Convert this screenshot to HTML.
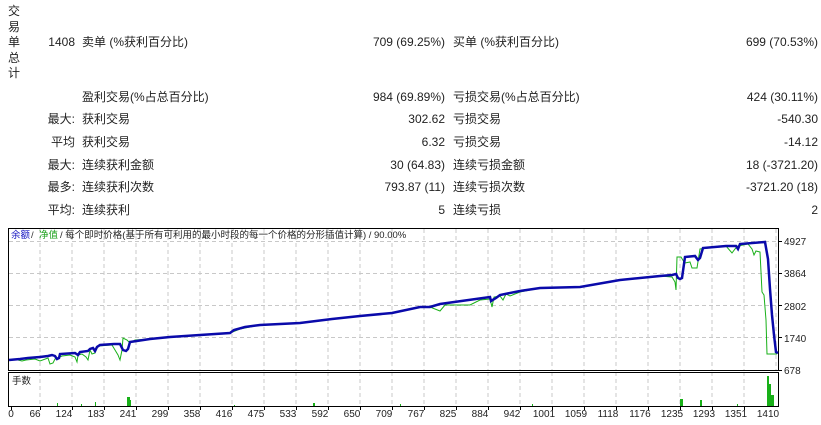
<!DOCTYPE html>
<html><head><meta charset="utf-8"><style>
body{margin:0;width:821px;height:425px;background:#fff;overflow:hidden;font-family:"Liberation Sans","Noto Sans CJK SC",sans-serif;font-size:12px;color:#222;position:relative}
.t{position:absolute;white-space:nowrap;line-height:14px}
.r{text-align:right}
.v{position:absolute;left:8px;top:4px;width:14px;line-height:15.5px;font-size:12px}
</style></head><body>
<div class="v">交<br>易<br>单<br>总<br>计</div>
<div class="t r" style="right:746px;top:35px">1408</div>
<div class="t" style="left:82px;top:35px">卖单 (%获利百分比)</div>
<div class="t r" style="right:376px;top:35px">709 (69.25%)</div>
<div class="t" style="left:453px;top:35px">买单 (%获利百分比)</div>
<div class="t r" style="right:3px;top:35px">699 (70.53%)</div>

<div class="t" style="left:82px;top:90px">盈利交易(%占总百分比)</div>
<div class="t r" style="right:376px;top:90px">984 (69.89%)</div>
<div class="t" style="left:453px;top:90px">亏损交易(%占总百分比)</div>
<div class="t r" style="right:3px;top:90px">424 (30.11%)</div>

<div class="t r" style="right:746px;top:112px">最大:</div>
<div class="t" style="left:82px;top:112px">获利交易</div>
<div class="t r" style="right:376px;top:112px">302.62</div>
<div class="t" style="left:453px;top:112px">亏损交易</div>
<div class="t r" style="right:3px;top:112px">-540.30</div>

<div class="t r" style="right:746px;top:135px">平均</div>
<div class="t" style="left:82px;top:135px">获利交易</div>
<div class="t r" style="right:376px;top:135px">6.32</div>
<div class="t" style="left:453px;top:135px">亏损交易</div>
<div class="t r" style="right:3px;top:135px">-14.12</div>

<div class="t r" style="right:746px;top:158px">最大:</div>
<div class="t" style="left:82px;top:158px">连续获利金额</div>
<div class="t r" style="right:376px;top:158px">30 (64.83)</div>
<div class="t" style="left:453px;top:158px">连续亏损金额</div>
<div class="t r" style="right:3px;top:158px">18 (-3721.20)</div>

<div class="t r" style="right:746px;top:180px">最多:</div>
<div class="t" style="left:82px;top:180px">连续获利次数</div>
<div class="t r" style="right:376px;top:180px">793.87 (11)</div>
<div class="t" style="left:453px;top:180px">连续亏损次数</div>
<div class="t r" style="right:3px;top:180px">-3721.20 (18)</div>

<div class="t r" style="right:746px;top:203px">平均:</div>
<div class="t" style="left:82px;top:203px">连续获利</div>
<div class="t r" style="right:376px;top:203px">5</div>
<div class="t" style="left:453px;top:203px">连续亏损</div>
<div class="t r" style="right:3px;top:203px">2</div>

<svg style="position:absolute;left:0;top:0" width="821" height="425" font-family="Liberation Sans, Noto Sans CJK SC, sans-serif">
<g stroke="#c8c8c8" stroke-dasharray="4,3" stroke-width="1">
<path d="M40 229V370M72 229V370M104 229V370M136 229V370M168 229V370M200 229V370M232 229V370M264 229V370M296 229V370M328 229V370M360 229V370M392 229V370M424 229V370M456 229V370M488 229V370M520 229V370M552 229V370M584 229V370M616 229V370M648 229V370M680 229V370M712 229V370M744 229V370M776 229V370"/>
<path d="M40 372V406M72 372V406M104 372V406M136 372V406M168 372V406M200 372V406M232 372V406M264 372V406M296 372V406M328 372V406M360 372V406M392 372V406M424 372V406M456 372V406M488 372V406M520 372V406M552 372V406M584 372V406M616 372V406M648 372V406M680 372V406M712 372V406M744 372V406"/>
<path d="M9 241.5H778M9 273.5H778M9 305.5H778M9 337.5H778"/>
</g>
<rect x="8.5" y="228.5" width="770" height="142" fill="none" stroke="#000"/>
<rect x="8.5" y="372.5" width="770" height="34" fill="none" stroke="#000"/>
<g stroke="#000"><path d="M778 241.5h4M778 273.5h4M778 305.5h4M778 337.5h4M778 370.5h4"/>
<path d="M11.5 407v3M40.5 407v3M72.5 407v3M104.5 407v3M136.5 407v3M168.5 407v3M200.5 407v3M232.5 407v3M264.5 407v3M296.5 407v3M328.5 407v3M360.5 407v3M392.5 407v3M424.5 407v3M456.5 407v3M488.5 407v3M520.5 407v3M552.5 407v3M584.5 407v3M616.5 407v3M648.5 407v3M680.5 407v3M712.5 407v3M744.5 407v3"/></g>
<path fill="none" stroke="#18b018" stroke-width="1" d="M9 360L18 360L22 361L26 360L35 359L40 361L48 358L50 364L53 363L55 359L62 356L70 355L75 357L77 362L78 355L82 354L86 357L88 360L90 350L92 354L95 353L98 346L112 345L115 350L118 355L120 360L122 350L123 338L127 340L130 343L135 340L150 339L200 335L230 333L240 329L260 325L300 323L330 319L360 316L392 313L420 307L430 307L440 311L445 305L470 305L480 300L490 299L492 307L494 297L500 296L503 300L506 294L510 296L520 292L540 288L580 287L620 280L660 276L672 277L675 282L676 290L677 257L681 257L684 262L685 263L690 262L692 268L697 268L700 249L726 246L732 253L735 249L738 246L748 244L752 249L754 255L756 251L760 252L762 292L764 295L766 320L767 354L777 354"/>
<path fill="none" stroke="#0a0aaa" stroke-width="2.5" d="M9 360L20 359L28 358L40 357L48 356L52 355L55 356L57 359L59 358L60 354L75 353L78 355L80 352L88 351L90 349L93 348L95 351L97 347L100 345L114 344L120 344L123 350L126 351L128 349L130 342L150 339L170 337L200 335L230 333L234 330L245 327L260 325L300 323L332 319L360 316L392 313L420 307L430 307L440 304L490 297L491 301L496 298L500 295L520 291L540 288L580 287L620 280L660 276L672 275L676 274L678 278L680 279L682 278L685 257L695 256L698 260L700 258L703 248L726 246L736 246L738 249L740 244L765 242L768 259L770 289L772 315L774 335L776 352L778 353"/>
<g fill="#18b018">
<rect x="57" y="403" width="1" height="3"/><rect x="81" y="404" width="1" height="2"/><rect x="95" y="402" width="1" height="4"/>
<rect x="127" y="397" width="3" height="9"/><rect x="130" y="400" width="1" height="6"/><rect x="234" y="405" width="1" height="1"/>
<rect x="313" y="403" width="2" height="3"/><rect x="400" y="404" width="1" height="2"/><rect x="532" y="404" width="1" height="2"/>
<rect x="680" y="399" width="3" height="7"/><rect x="700" y="400" width="2" height="6"/><rect x="737" y="404" width="1" height="2"/>
<rect x="767" y="376" width="2" height="30"/><rect x="769" y="384" width="2" height="22"/><rect x="771" y="395" width="3" height="11"/>
</g>
<g font-size="9.5">
<text x="11" y="238" fill="#1010c0">余额</text><text x="31" y="238" fill="#333">/</text><text x="39" y="238" fill="#18a018">净值</text>
<text x="60" y="238" fill="#222">/ 每个即时价格(基于所有可利用的最小时段的每一个价格的分形插值计算) / 90.00%</text>
<text x="12" y="384" fill="#222">手数</text>
</g>
<g font-size="10" fill="#222">
<text x="784" y="245">4927</text><text x="784" y="277">3864</text><text x="784" y="310">2802</text><text x="784" y="342">1740</text><text x="784" y="374">678</text>
</g>
<g font-size="10" fill="#222" text-anchor="middle">
<text x="11" y="417">0</text><text x="35" y="417">66</text><text x="64" y="417">124</text><text x="96" y="417">183</text><text x="128" y="417">241</text><text x="160" y="417">299</text><text x="192" y="417">358</text><text x="224" y="417">416</text><text x="256" y="417">475</text><text x="288" y="417">533</text><text x="320" y="417">592</text><text x="352" y="417">650</text><text x="384" y="417">709</text><text x="416" y="417">767</text><text x="448" y="417">825</text><text x="480" y="417">884</text><text x="512" y="417">942</text><text x="544" y="417">1001</text><text x="576" y="417">1059</text><text x="608" y="417">1118</text><text x="640" y="417">1176</text><text x="672" y="417">1235</text><text x="704" y="417">1293</text><text x="736" y="417">1351</text><text x="768" y="417">1410</text>
</g>
</svg>
</body></html>
